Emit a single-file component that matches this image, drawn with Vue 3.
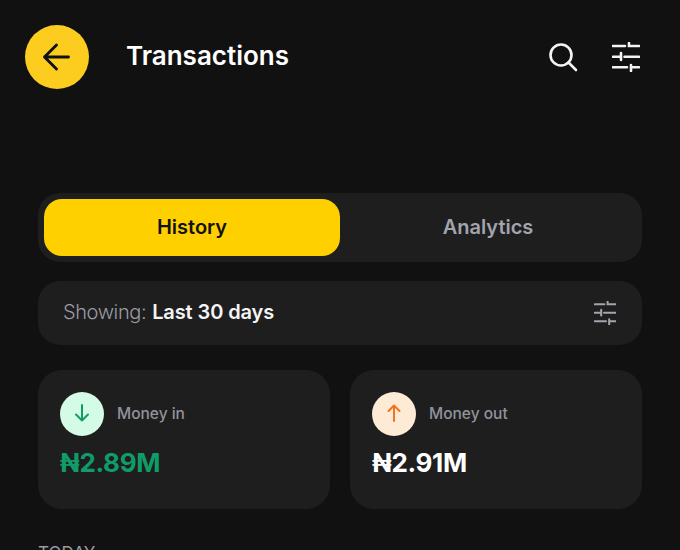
<template>
  <div class="screen">
    <header class="top-bar">
      <button class="back-btn" aria-label="Back">
        <svg width="30" height="30" viewBox="0 0 30 30" fill="none" stroke="#111112" stroke-width="2.900" stroke-linecap="round" stroke-linejoin="round">
          <path d="M26.500 15H2.500M14.500 3 2.500 15l12 12" />
        </svg>
      </button>
      <h1 class="title">Transactions</h1>
      <div class="top-icons">
        <svg width="30" height="30" viewBox="0 0 30 30" fill="none" stroke="#f4f4f5" stroke-width="2.600" stroke-linecap="round">
          <circle cx="13" cy="13" r="10.500" />
          <path d="M20.500 20.500 28 28" />
        </svg>
        <svg width="28" height="30" viewBox="0 0 28 30" fill="none" stroke="#f4f4f5" stroke-width="2.600" stroke-linecap="round">
          <path :d="sliderPath" />
        </svg>
      </div>
    </header>

    <main class="content">
      <div class="tabs">
        <div
          v-for="tab in tabs"
          :key="tab.label"
          class="tab"
          :class="{ active: tab.active }"
        >
          {{ tab.label }}
        </div>
      </div>

      <div class="filter-row">
        <div class="filter-text">
          <span class="filter-label">Showing:</span>
          <span class="filter-value">Last 30 days</span>
        </div>
        <svg width="22.400" height="24" viewBox="0 0 28 30" fill="none" stroke="#a3a4ad" stroke-width="2.600" stroke-linecap="round">
          <path :d="sliderPath" />
        </svg>
      </div>

      <div class="cards">
        <div v-for="card in cards" :key="card.label" class="card">
          <div class="card-head">
            <div class="card-icon" :class="card.type">
              <svg width="20" height="20" viewBox="0 0 20 20" fill="none" stroke="currentColor" stroke-width="2" stroke-linecap="round" stroke-linejoin="round">
                <path :d="card.arrow" />
              </svg>
            </div>
            <span class="card-label">{{ card.label }}</span>
          </div>
          <div class="card-amount" :class="card.type">{{ card.amount }}</div>
        </div>
      </div>

      <div class="section-label">TODAY</div>
    </main>
  </div>
</template>

<script setup>
const sliderPath =
  "M1 4H13M17 1V4H27M1 14.700H8M9 11V18M12.500 14.700H27M1 25.300H15M19 23V29M19 25.300H27";

const tabs = [
  { label: "History", active: true },
  { label: "Analytics", active: false },
];

const cards = [
  {
    label: "Money in",
    amount: "₦2.89M",
    type: "in",
    arrow: "M10 1V16.500M4 10.500l6 6 6-6",
  },
  {
    label: "Money out",
    amount: "₦2.91M",
    type: "out",
    arrow: "M10 17V1.500M4.500 7l5.500-5.500 5.500 5.500",
  },
];
</script>

<style>
html,
body {
  background: #111112;
}
</style>

<style scoped>
.screen {
  width: 680px;
  height: 550px;
  overflow: hidden;
  background: #111112;
  font-family: Inter, "Liberation Sans", sans-serif;
  color: #fff;
}
.top-bar {
  display: flex;
  align-items: center;
  padding: 25px 40px 0 25px;
}
.back-btn {
  width: 64px;
  height: 64px;
  display: flex;
  align-items: center;
  justify-content: center;
  flex-shrink: 0;
  padding: 0;
  border: none;
  border-radius: 50%;
  background: #fccc1f;
}
.title {
  margin: 0 0 2px 37px;
  font-size: 26px;
  font-weight: 600;
  line-height: 32px;
  color: #fff;
}
.top-icons {
  margin-left: auto;
  display: flex;
  align-items: center;
  gap: 34px;
}
.content {
  padding: 104px 38px 0;
}
.tabs {
  display: flex;
  padding: 6px;
  height: 69px;
  box-sizing: border-box;
  border-radius: 22px;
  background: #1e1e1f;
}
.tab {
  flex: 1;
  display: flex;
  align-items: center;
  justify-content: center;
  padding-bottom: 2px;
  border-radius: 18px;
  font-size: 20px;
  font-weight: 600;
  color: #a3a4ad;
}
.tab.active {
  background: #ffd000;
  color: #111112;
}
.filter-row {
  display: flex;
  align-items: center;
  justify-content: space-between;
  height: 64px;
  margin-top: 19px;
  padding: 0 26px 0 25px;
  box-sizing: border-box;
  border-radius: 22px;
  background: #1e1e1f;
}
.filter-text {
  padding-bottom: 2px;
  font-size: 20px;
}
.filter-label {
  letter-spacing: -0.4px;
  color: #9a9ba3;
  font-weight: 300;
}
.filter-value {
  margin-left: 6px;
  letter-spacing: -0.1px;
  color: #f4f4f5;
  font-weight: 600;
}
.cards {
  display: grid;
  grid-template-columns: 1fr 1fr;
  gap: 20px;
  margin-top: 25px;
}
.card {
  height: 139px;
  padding: 22px;
  box-sizing: border-box;
  border-radius: 24px;
  background: #1e1e1f;
}
.card-head {
  display: flex;
  align-items: center;
  gap: 13px;
}
.card-icon {
  width: 44px;
  height: 44px;
  display: flex;
  align-items: center;
  justify-content: center;
  border-radius: 50%;
}
.card-icon.in {
  background: #d3fbe5;
  color: #109c69;
}
.card-icon.out {
  background: #fdebd6;
  color: #f2731c;
}
.card-label {
  margin-bottom: 2px;
  font-size: 15.500px;
  font-weight: 500;
  color: #92939c;
}
.card-amount {
  margin-top: 10px;
  font-size: 26px;
  font-weight: 700;
  letter-spacing: -0.3px;
  line-height: 34px;
}
.card-amount.in {
  color: #109c69;
}
.card-amount.out {
  color: #fff;
}
.section-label {
  margin-top: 34px;
  font-size: 17px;
  color: #9a9ba3;
}
</style>
